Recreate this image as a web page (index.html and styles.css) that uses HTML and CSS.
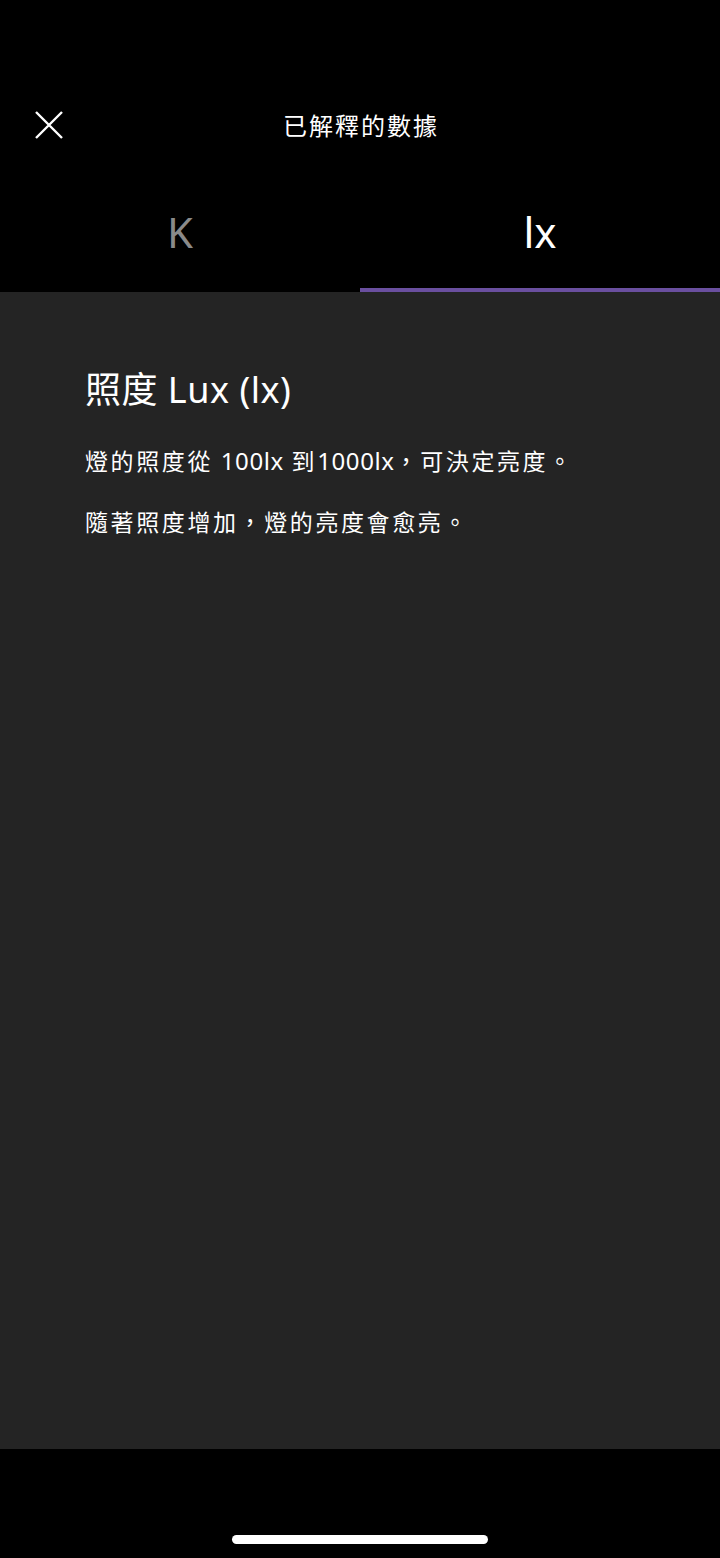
FILE: index.html
```html
<!DOCTYPE html>
<html lang="zh-Hant">
<head>
<meta charset="utf-8">
<link rel="stylesheet" href="styles.css">
</head>
<body>
<div class="screen">
  <div class="top">
    <div class="header">
      <button class="close" aria-label="close">
        <svg width="28" height="28" viewBox="0 0 28 28"><path d="M1 1 L27 27 M27 1 L1 27" stroke="#fff" stroke-width="2.4" fill="none"/></svg>
      </button>
      <div class="title">已解釋的數據</div>
    </div>
    <div class="tabs">
      <div class="tab">K</div>
      <div class="tab active">lx</div>
    </div>
  </div>
  <div class="content">
    <h1 class="heading">照度 Lux (lx)</h1>
    <p class="text">燈的照度從 <span class="latin">100lx</span> 到<span class="latin">1000lx</span>，可決定亮度。</p>
    <p class="text">隨著照度增加，燈的亮度會愈亮。</p>
  </div>
  <div class="bottom">
    <div class="home"></div>
  </div>
</div>
</body>
</html>
```
FILE: styles.css
```css
* { box-sizing: border-box; }
html, body { margin: 0; padding: 0; background: #000; }
body { font-family: "Noto Sans", "Noto Sans CJK TC", sans-serif; color: #fff; }
.screen { width: 720px; height: 1558px; display: flex; flex-direction: column; }
.top { background: #000; height: 292px; display: flex; flex-direction: column; }
.header { height: 196px; position: relative; display: flex; justify-content: center; padding-top: 108px; }
.close { position: absolute; left: 34px; top: 111px; width: 30px; height: 30px; padding: 0; border: 0; background: none; }
.title { font-family: "Noto Sans CJK TC", sans-serif; font-size: 24px; letter-spacing: 2px; line-height: 34px; margin-left: 2px; }
.tabs { flex: 1; display: flex; }
.tab { flex: 1; display: flex; justify-content: center; align-items: flex-start; font-size: 42px; line-height: 56px; color: #8a8a8a; border-bottom: 4px solid transparent; padding-top: 8px; }
.tab.active { color: #fff; border-bottom-color: #6a4f9f; }
.content { flex: 1; background: #242424; padding: 73px 85px 0; }
.heading { margin: 0; font-family: "Noto Sans", "Noto Sans CJK TC", sans-serif; font-weight: 400; font-size: 36px; line-height: 50px; letter-spacing: 0.5px; }
.text { margin: 24px 0 0; font-family: "Noto Sans CJK TC", sans-serif; font-size: 23px; letter-spacing: 2.6px; line-height: 42px; }
.text + .text { margin-top: 18px; }
.latin { font-family: "Noto Sans", sans-serif; font-size: 24px; letter-spacing: 0.6px; }
.bottom { height: 109px; background: #000; display: flex; justify-content: center; align-items: flex-end; padding-bottom: 14px; }
.home { width: 256px; height: 9px; border-radius: 5px; background: #fff; }
```
